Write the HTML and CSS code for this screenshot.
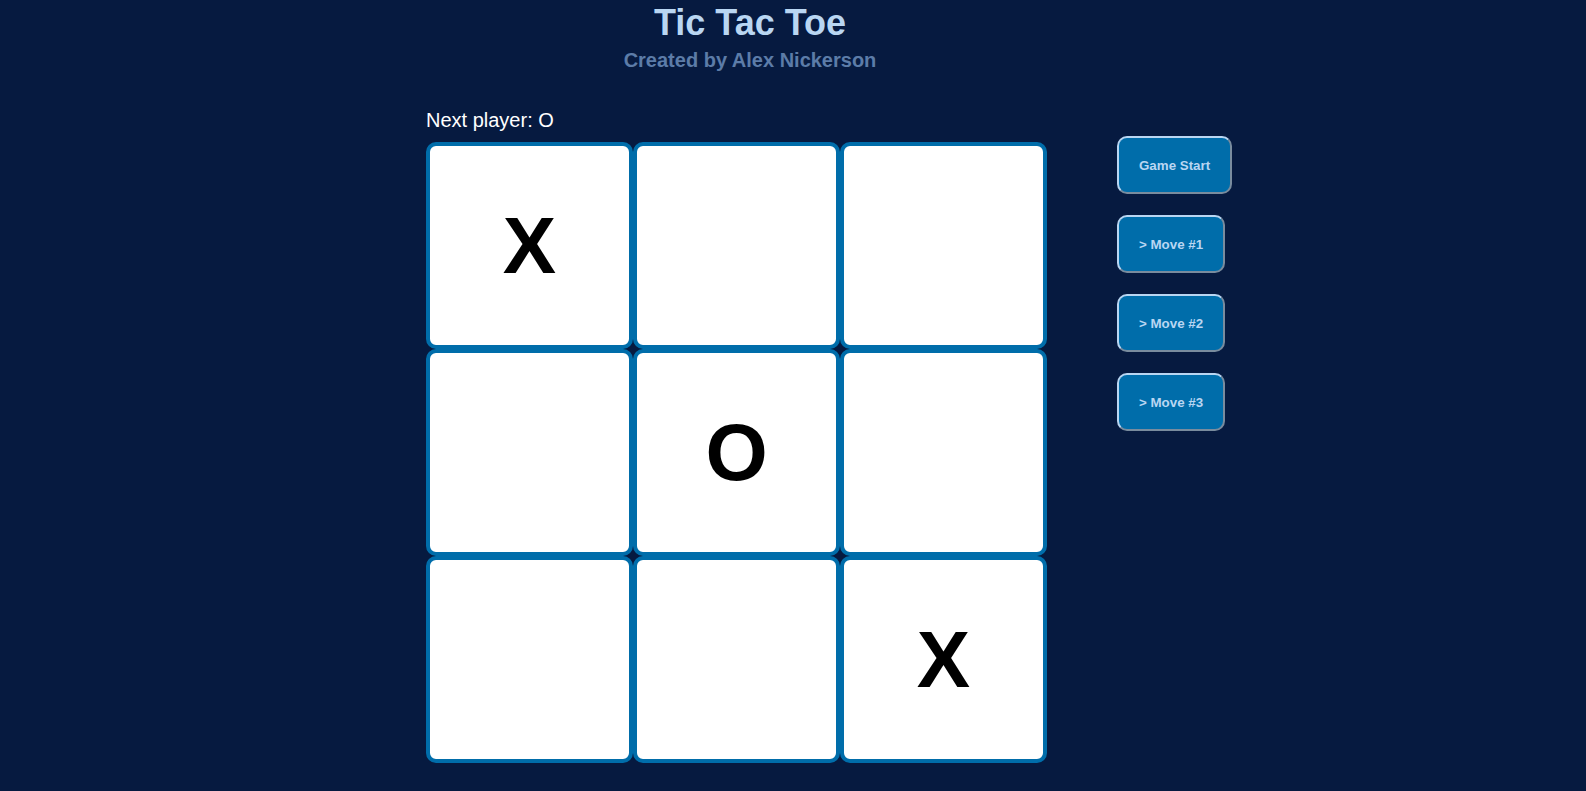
FILE: index.html
```html
<!DOCTYPE html>
<html>
<head>
<meta charset="utf-8">
<title>Tic Tac Toe</title>
<link rel="stylesheet" href="styles.css">
</head>
<body>
<header class="header">
  <h1 class="title">Tic Tac Toe</h1>
  <h2 class="subtitle">Created by Alex Nickerson</h2>
</header>
<main class="game">
  <section class="game-board">
    <div class="status">Next player: O</div>
    <div class="board">
      <button class="square">X</button>
      <button class="square"></button>
      <button class="square"></button>
      <button class="square"></button>
      <button class="square">O</button>
      <button class="square"></button>
      <button class="square"></button>
      <button class="square"></button>
      <button class="square">X</button>
    </div>
  </section>
  <ol class="moves">
    <li><button class="move">Game Start</button></li>
    <li><button class="move">&gt; Move #1</button></li>
    <li><button class="move">&gt; Move #2</button></li>
    <li><button class="move">&gt; Move #3</button></li>
  </ol>
</main>
</body>
</html>
```

FILE: styles.css
```css
html, body {
  margin: 0;
  padding: 0;
  background: #061A40;
  font-family: "Liberation Sans", Arial, sans-serif;
}

.header {
  width: 1500px;
  text-align: center;
  padding-top: 3px;
}

.title {
  margin: 0;
  font-size: 36px;
  line-height: 40px;
  font-weight: bold;
  color: #B9D6F2;
}

.subtitle {
  margin: 6px 0 0 0;
  font-size: 20px;
  line-height: 23px;
  font-weight: bold;
  color: #5C7CA8;
}

.game {
  display: flex;
  align-items: flex-start;
  padding-left: 426px;
  margin-top: 37px;
  gap: 70px;
}

.status {
  font-size: 20px;
  line-height: 23px;
  color: #ffffff;
  margin-bottom: 10px;
}

.board {
  display: grid;
  grid-template-columns: repeat(3, 207px);
  grid-template-rows: repeat(3, 207px);
}

.square {
  box-sizing: border-box;
  width: 207px;
  height: 207px;
  margin: 0;
  padding: 0;
  background: #ffffff;
  border: 4px solid #006DAA;
  border-radius: 10px;
  font-family: "Liberation Sans", Arial, sans-serif;
  font-size: 80px;
  font-weight: bold;
  line-height: 199px;
  color: #000000;
  text-align: center;
}

.moves {
  list-style: none;
  margin: 27px 0 0 0;
  padding: 0;
  display: flex;
  flex-direction: column;
  align-items: flex-start;
  gap: 21px;
}

.move {
  margin: 0;
  padding: 20px 20px 19px;
  background: #006DAA;
  color: #B9D6F2;
  border: 2px outset #B9D6F2;
  border-radius: 10px;
  font-family: "Liberation Sans", Arial, sans-serif;
  font-size: 13.333px;
  font-weight: bold;
  line-height: 15px;
}
```
